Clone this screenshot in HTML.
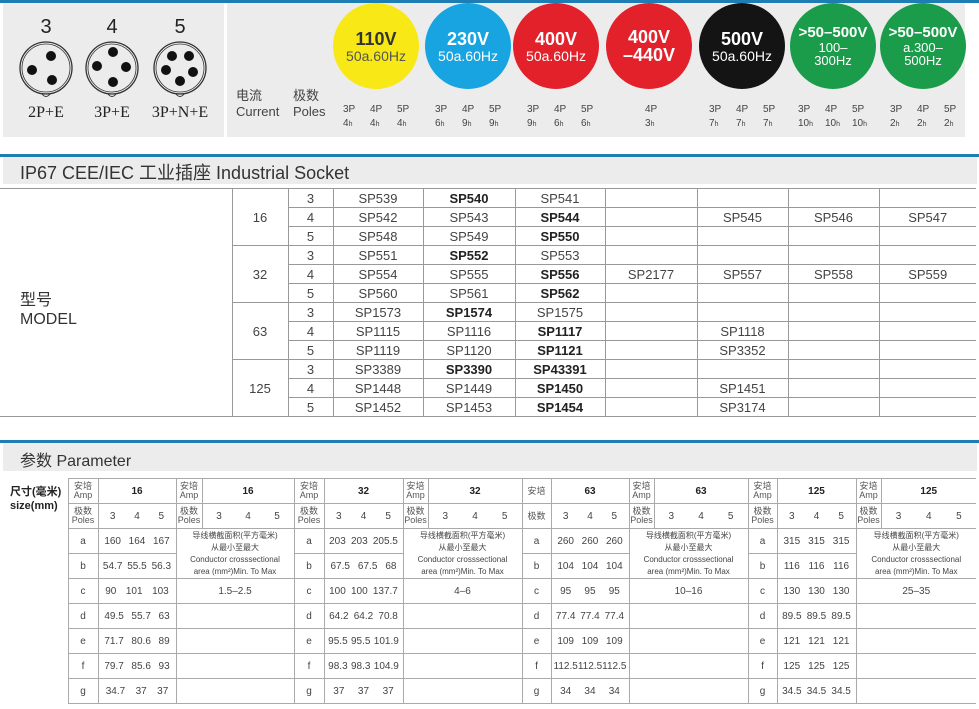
<!DOCTYPE html>
<html><head><meta charset="utf-8">
<style>
*{margin:0;padding:0;box-sizing:border-box}
body{width:979px;height:709px;background:#fff;position:relative;overflow:hidden;font-family:"Liberation Sans","Noto Sans CJK SC",sans-serif;color:#333}
.abs{position:absolute}
.circ{position:absolute;border-radius:50%;width:86px;height:86px;top:3px;text-align:center;color:#fff;display:flex;flex-direction:column;justify-content:center;line-height:1}
.circ b{font-size:18px;font-weight:bold}
.circ span{font-size:14px;margin-top:1px}
.pl{position:absolute;font-size:10px;line-height:14px;color:#444;text-align:left}
.pl i{font-style:normal;font-size:7px}
.bar{position:absolute;left:0;width:979px;background:#1e7eb3;height:3px}
.band{position:absolute;left:3px;width:974px;background:#ececec}
table{border-collapse:collapse;table-layout:fixed;position:absolute}
#t1 td{border:1px solid #999;height:19px;font-size:13px;text-align:center;color:#444;padding:0;line-height:17px}
#t1 td.b{font-weight:bold;color:#222}
#t2 td{border:1.5px solid #aaa;height:25px;font-size:10px;text-align:center;color:#444;padding:0;line-height:11px}
#t2 .s{font-size:9px;line-height:9px;color:#555}
#t2 .n{font-weight:bold;color:#222}
.v{display:flex;justify-content:space-around;padding:0 2px}
#t2 .w{font-size:8px;line-height:12px;vertical-align:middle}
</style></head><body>
<div class="bar" style="top:0"></div>
<div class="abs" style="left:3px;top:3px;width:221px;height:134px;background:#ececec"></div>
<div class="abs" style="left:227px;top:3px;width:738px;height:134px;background:#ececec"></div>
<svg class="abs" style="left:0;top:0" width="225" height="137">
<g font-family="Liberation Sans" font-size="20" fill="#222" text-anchor="middle">
<text x="46" y="33">3</text><text x="112" y="33">4</text><text x="180" y="33">5</text></g>
<g font-family="Liberation Serif" font-size="16" fill="#222" text-anchor="middle">
<text x="46" y="117">2P+E</text><text x="112" y="117">3P+E</text><text x="180" y="117">3P+N+E</text></g>
<g fill="none" stroke="#333">
<circle cx="46" cy="68" r="26" stroke-width="1.3"/><circle cx="46" cy="68" r="24" stroke-width="0.8"/>
<circle cx="112" cy="68" r="26" stroke-width="1.3"/><circle cx="112" cy="68" r="24" stroke-width="0.8"/>
<circle cx="180" cy="68" r="26" stroke-width="1.3"/><circle cx="180" cy="68" r="24" stroke-width="0.8"/>
<path d="M42 94 q4 5 8 0 M108 94 q4 5 8 0 M176 94 q4 5 8 0"/></g>
<g fill="#111">
<circle cx="51" cy="56" r="5"/><circle cx="32" cy="70" r="5"/><circle cx="52" cy="80" r="5"/>
<circle cx="113" cy="52" r="5"/><circle cx="97" cy="66" r="5"/><circle cx="126" cy="67" r="5"/><circle cx="113" cy="82" r="5"/>
<circle cx="172" cy="56" r="5"/><circle cx="189" cy="56" r="5"/><circle cx="166" cy="70" r="5"/><circle cx="193" cy="72" r="5"/><circle cx="180" cy="81" r="5"/>
</g></svg>
<div class="abs" style="left:236px;top:88px;font-size:13px;line-height:16px;color:#444">电流<br>Current</div>
<div class="abs" style="left:293px;top:88px;font-size:13px;line-height:16px;color:#444">极数<br>Poles</div>

<div class="circ" style="left:333px;background:#f7e816;color:#555"><b style="color:#333">110V</b><span>50a.60Hz</span></div>
<div class="circ" style="left:425px;background:#17a4e0"><b>230V</b><span>50a.60Hz</span></div>
<div class="circ" style="left:513px;background:#e2212b"><b>400V</b><span>50a.60Hz</span></div>
<div class="circ" style="left:606px;background:#e2212b"><b>400V<br>–440V</b></div>
<div class="circ" style="left:699px;background:#141414"><b>500V</b><span>50a.60Hz</span></div>
<div class="circ" style="left:790px;background:#1b9c4a"><b style="font-size:15px">&gt;50–500V</b><span style="font-size:13px">100–<br>300Hz</span></div>
<div class="circ" style="left:880px;background:#1b9c4a"><b style="font-size:15px">&gt;50–500V</b><span style="font-size:13px">a.300–<br>500Hz</span></div>

<div class="pl" style="left:343px;top:103px">3P<br>4<i>h</i></div><div class="pl" style="left:370px;top:103px">4P<br>4<i>h</i></div><div class="pl" style="left:397px;top:103px">5P<br>4<i>h</i></div>
<div class="pl" style="left:435px;top:103px">3P<br>6<i>h</i></div><div class="pl" style="left:462px;top:103px">4P<br>9<i>h</i></div><div class="pl" style="left:489px;top:103px">5P<br>9<i>h</i></div>
<div class="pl" style="left:527px;top:103px">3P<br>9<i>h</i></div><div class="pl" style="left:554px;top:103px">4P<br>6<i>h</i></div><div class="pl" style="left:581px;top:103px">5P<br>6<i>h</i></div>
<div class="pl" style="left:645px;top:103px">4P<br>3<i>h</i></div>
<div class="pl" style="left:709px;top:103px">3P<br>7<i>h</i></div><div class="pl" style="left:736px;top:103px">4P<br>7<i>h</i></div><div class="pl" style="left:763px;top:103px">5P<br>7<i>h</i></div>
<div class="pl" style="left:798px;top:103px">3P<br>10<i>h</i></div><div class="pl" style="left:825px;top:103px">4P<br>10<i>h</i></div><div class="pl" style="left:852px;top:103px">5P<br>10<i>h</i></div>
<div class="pl" style="left:890px;top:103px">3P<br>2<i>h</i></div><div class="pl" style="left:917px;top:103px">4P<br>2<i>h</i></div><div class="pl" style="left:944px;top:103px">5P<br>2<i>h</i></div>

<div class="bar" style="top:154px"></div>
<div class="band" style="top:157px;height:27px"></div>
<div class="abs" style="left:20px;top:159px;font-size:18px;color:#333">IP67 CEE/IEC 工业插座 Industrial Socket</div>

<table id="t1" style="left:0;top:188px;width:976px">
<colgroup><col style="width:232px"><col style="width:56px"><col style="width:45px"><col style="width:90px"><col style="width:92px"><col style="width:90px"><col style="width:92px"><col style="width:91px"><col style="width:91px"><col style="width:97px"></colgroup>
<tr><td rowspan="12" style="border-left:0;text-align:left;padding-left:20px;padding-top:14px;font-size:16px;line-height:19px;color:#333">型号<br>MODEL</td><td rowspan="3">16</td><td>3</td><td>SP539</td><td class="b">SP540</td><td>SP541</td><td></td><td></td><td></td><td style="border-right:0"></td></tr>
<tr><td>4</td><td>SP542</td><td>SP543</td><td class="b">SP544</td><td></td><td>SP545</td><td>SP546</td><td style="border-right:0">SP547</td></tr>
<tr><td>5</td><td>SP548</td><td>SP549</td><td class="b">SP550</td><td></td><td></td><td></td><td style="border-right:0"></td></tr>
<tr><td rowspan="3">32</td><td>3</td><td>SP551</td><td class="b">SP552</td><td>SP553</td><td></td><td></td><td></td><td style="border-right:0"></td></tr>
<tr><td>4</td><td>SP554</td><td>SP555</td><td class="b">SP556</td><td>SP2177</td><td>SP557</td><td>SP558</td><td style="border-right:0">SP559</td></tr>
<tr><td>5</td><td>SP560</td><td>SP561</td><td class="b">SP562</td><td></td><td></td><td></td><td style="border-right:0"></td></tr>
<tr><td rowspan="3">63</td><td>3</td><td>SP1573</td><td class="b">SP1574</td><td>SP1575</td><td></td><td></td><td></td><td style="border-right:0"></td></tr>
<tr><td>4</td><td>SP1115</td><td>SP1116</td><td class="b">SP1117</td><td></td><td>SP1118</td><td></td><td style="border-right:0"></td></tr>
<tr><td>5</td><td>SP1119</td><td>SP1120</td><td class="b">SP1121</td><td></td><td>SP3352</td><td></td><td style="border-right:0"></td></tr>
<tr><td rowspan="3">125</td><td>3</td><td>SP3389</td><td class="b">SP3390</td><td class="b">SP43391</td><td></td><td></td><td></td><td style="border-right:0"></td></tr>
<tr><td>4</td><td>SP1448</td><td>SP1449</td><td class="b">SP1450</td><td></td><td>SP1451</td><td></td><td style="border-right:0"></td></tr>
<tr><td>5</td><td>SP1452</td><td>SP1453</td><td class="b">SP1454</td><td></td><td>SP3174</td><td></td><td style="border-right:0"></td></tr>
</table>

<div class="bar" style="top:440px"></div>
<div class="band" style="top:443px;height:28px"></div>
<div class="abs" style="left:20px;top:447px;font-size:16px;color:#333">参数 Parameter</div>

<table id="t2" style="left:0;top:478px;width:976px">
<colgroup><col style="width:68px">
<col style="width:30px"><col style="width:78px"><col style="width:26px"><col style="width:92px">
<col style="width:30px"><col style="width:79px"><col style="width:25px"><col style="width:94px">
<col style="width:29px"><col style="width:78px"><col style="width:25px"><col style="width:94px">
<col style="width:29px"><col style="width:79px"><col style="width:25px"><col style="width:95px"></colgroup>
<tr><td rowspan="9" style="border:0;border-right:1.5px solid #aaa;vertical-align:top;text-align:left;padding:6px 0 0 10px;font-size:11px;line-height:14px;font-weight:bold;color:#222">尺寸(毫米)<br>size(mm)</td>
<td class="s">安培<br>Amp</td><td class="n">16</td><td class="s">安培<br>Amp</td><td class="n">16</td>
<td class="s">安培<br>Amp</td><td class="n">32</td><td class="s">安培<br>Amp</td><td class="n">32</td>
<td class="s">安培</td><td class="n">63</td><td class="s">安培<br>Amp</td><td class="n">63</td>
<td class="s">安培<br>Amp</td><td class="n">125</td><td class="s">安培<br>Amp</td><td class="n" style="border-right:0">125</td></tr>
<tr><td class="s">极数<br>Poles</td><td><div class="v"><span>3</span><span>4</span><span>5</span></div></td><td class="s">极数<br>Poles</td><td><div class="v"><span>3</span><span>4</span><span>5</span></div></td>
<td class="s">极数<br>Poles</td><td><div class="v"><span>3</span><span>4</span><span>5</span></div></td><td class="s">极数<br>Poles</td><td><div class="v"><span>3</span><span>4</span><span>5</span></div></td>
<td class="s">极数</td><td><div class="v"><span>3</span><span>4</span><span>5</span></div></td><td class="s">极数<br>Poles</td><td><div class="v"><span>3</span><span>4</span><span>5</span></div></td>
<td class="s">极数<br>Poles</td><td><div class="v"><span>3</span><span>4</span><span>5</span></div></td><td class="s">极数<br>Poles</td><td style="border-right:0"><div class="v"><span>3</span><span>4</span><span>5</span></div></td></tr>
<tr><td>a</td><td><div class="v"><span>160</span><span>164</span><span>167</span></div></td><td colspan="2" rowspan="2" class="w">导线横截面积(平方毫米)<br>从最小至最大<br>Conductor crosssectional<br>area (mm²)Min. To Max</td>
<td>a</td><td><div class="v"><span>203</span><span>203</span><span>205.5</span></div></td><td colspan="2" rowspan="2" class="w">导线横截面积(平方毫米)<br>从最小至最大<br>Conductor crosssectional<br>area (mm²)Min. To Max</td>
<td>a</td><td><div class="v"><span>260</span><span>260</span><span>260</span></div></td><td colspan="2" rowspan="2" class="w">导线横截面积(平方毫米)<br>从最小至最大<br>Conductor crosssectional<br>area (mm²)Min. To Max</td>
<td>a</td><td><div class="v"><span>315</span><span>315</span><span>315</span></div></td><td colspan="2" rowspan="2" class="w" style="border-right:0">导线横截面积(平方毫米)<br>从最小至最大<br>Conductor crosssectional<br>area (mm²)Min. To Max</td></tr>
<tr><td>b</td><td><div class="v"><span>54.7</span><span>55.5</span><span>56.3</span></div></td><td>b</td><td><div class="v"><span>67.5</span><span>67.5</span><span>68</span></div></td><td>b</td><td><div class="v"><span>104</span><span>104</span><span>104</span></div></td><td>b</td><td><div class="v"><span>116</span><span>116</span><span>116</span></div></td></tr>
<tr><td>c</td><td><div class="v"><span>90</span><span>101</span><span>103</span></div></td><td colspan="2">1.5–2.5</td><td>c</td><td><div class="v"><span>100</span><span>100</span><span>137.7</span></div></td><td colspan="2">4–6</td><td>c</td><td><div class="v"><span>95</span><span>95</span><span>95</span></div></td><td colspan="2">10–16</td><td>c</td><td><div class="v"><span>130</span><span>130</span><span>130</span></div></td><td colspan="2" style="border-right:0">25–35</td></tr>
<tr><td>d</td><td><div class="v"><span>49.5</span><span>55.7</span><span>63</span></div></td><td colspan="2"></td><td>d</td><td><div class="v"><span>64.2</span><span>64.2</span><span>70.8</span></div></td><td colspan="2"></td><td>d</td><td><div class="v"><span>77.4</span><span>77.4</span><span>77.4</span></div></td><td colspan="2"></td><td>d</td><td><div class="v"><span>89.5</span><span>89.5</span><span>89.5</span></div></td><td colspan="2" style="border-right:0"></td></tr>
<tr><td>e</td><td><div class="v"><span>71.7</span><span>80.6</span><span>89</span></div></td><td colspan="2"></td><td>e</td><td><div class="v"><span>95.5</span><span>95.5</span><span>101.9</span></div></td><td colspan="2"></td><td>e</td><td><div class="v"><span>109</span><span>109</span><span>109</span></div></td><td colspan="2"></td><td>e</td><td><div class="v"><span>121</span><span>121</span><span>121</span></div></td><td colspan="2" style="border-right:0"></td></tr>
<tr><td>f</td><td><div class="v"><span>79.7</span><span>85.6</span><span>93</span></div></td><td colspan="2"></td><td>f</td><td><div class="v"><span>98.3</span><span>98.3</span><span>104.9</span></div></td><td colspan="2"></td><td>f</td><td><div class="v"><span>112.5</span><span>112.5</span><span>112.5</span></div></td><td colspan="2"></td><td>f</td><td><div class="v"><span>125</span><span>125</span><span>125</span></div></td><td colspan="2" style="border-right:0"></td></tr>
<tr><td>g</td><td><div class="v"><span>34.7</span><span>37</span><span>37</span></div></td><td colspan="2"></td><td>g</td><td><div class="v"><span>37</span><span>37</span><span>37</span></div></td><td colspan="2"></td><td>g</td><td><div class="v"><span>34</span><span>34</span><span>34</span></div></td><td colspan="2"></td><td>g</td><td><div class="v"><span>34.5</span><span>34.5</span><span>34.5</span></div></td><td colspan="2" style="border-right:0"></td></tr>
</table>
</body></html>
